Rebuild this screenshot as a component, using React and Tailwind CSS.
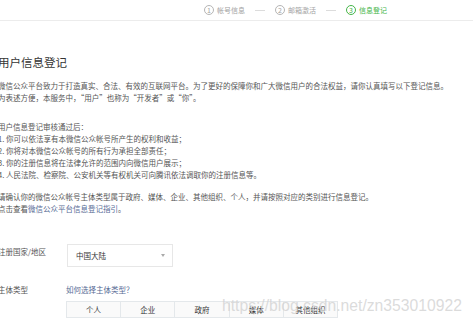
const steps = [
  { n: '1', label: '帐号信息', active: false },
  { n: '2', label: '邮箱激活', active: false },
  { n: '3', label: '信息登记', active: true },
];

const types = ['个人', '企业', '政府', '媒体', '其他组织'];

const Step = ({ n, label, active }) => (
  <div className={`flex items-center gap-[3px] ${active ? 'text-[#44b549]' : 'text-[#a3a3a3]'}`}>
    <span
      className={`flex h-[10px] w-[10px] items-center justify-center rounded-full border text-[7px] leading-none ${
        active ? 'border-[#44b549]' : 'border-[#b5b5b5]'
      }`}
    >
      {n}
    </span>
    <span className="text-[7px]">{label}</span>
  </div>
);

export default function App() {
  return (
    <div className="relative h-[326px] w-[473px] overflow-hidden bg-white font-['Noto_Sans_CJK_SC','Liberation_Sans',sans-serif]">
      {/* steps */}
      <div className="flex h-[21px] items-center border-b border-[#ececec] pl-[204px]">
        <Step {...steps[0]} />
        <span className="mx-[10px] h-px w-[10px] bg-[#dcdcdc]" />
        <Step {...steps[1]} />
        <span className="mx-[10px] h-px w-[10px] bg-[#dcdcdc]" />
        <Step {...steps[2]} />
      </div>

      <div className="-ml-[2px] text-[7.5px] leading-[12px] text-[#555]">
        <h2 className="mt-[33px] text-[11.5px] leading-[16px] text-[#353535]">用户信息登记</h2>

        <div className="mt-[10px]">
          <p>微信公众平台致力于打造真实、合法、有效的互联网平台。为了更好的保障你和广大微信用户的合法权益，请你认真填写以下登记信息。</p>
          <p>为表述方便，本服务中，“用户”也称为“开发者”或“你”。</p>
        </div>

        <div className="mt-[17px]">
          <p>用户信息登记审核通过后：</p>
          <p>1. 你可以依法享有本微信公众帐号所产生的权利和收益；</p>
          <p>2. 你将对本微信公众帐号的所有行为承担全部责任；</p>
          <p>3. 你的注册信息将在法律允许的范围内向微信用户展示；</p>
          <p>4. 人民法院、检察院、公安机关等有权机关可向腾讯依法调取你的注册信息等。</p>
        </div>

        <div className="mt-[10px]">
          <p>请确认你的微信公众帐号主体类型属于政府、媒体、企业、其他组织、个人，并请按照对应的类别进行信息登记。</p>
          <p>
            点击查看<span className="text-[#576b95]">微信公众平台信息登记指引</span>。
          </p>
        </div>

        <div className="mt-[29px] flex items-start">
          <span className="mt-[2px] w-[69px]">注册国家/地区</span>
          <div className="flex h-[23px] w-[106px] items-center justify-between border border-[#e7e7e7] pl-[8px] pr-[7px] text-[#353535]">
            <span>中国大陆</span>
            <span className="h-0 w-0 border-x-[2.5px] border-t-[3px] border-x-transparent border-t-[#aaa]" />
          </div>
        </div>

        <div className="mt-[17px] flex items-start">
          <span className="w-[68px]">主体类型</span>
          <div className="flex flex-col">
            <span className="text-[#576b95]">如何选择主体类型？</span>
            <div className="mt-[5px] flex w-[272px] border border-[#e4e8eb] bg-[#fafafa]">
              {types.map((t, i) => (
                <div
                  key={t}
                  className={`flex h-[15px] flex-1 items-center justify-center text-[#353535] ${
                    i > 0 ? 'border-l border-[#e4e8eb]' : ''
                  }`}
                >
                  {t}
                </div>
              ))}
            </div>
          </div>
        </div>
      </div>

      {/* watermark */}
      <div className="absolute left-[222px] top-[298px] font-['Liberation_Sans',sans-serif] text-[15.7px] leading-none text-[#d2d2d2]/80">
        https://blog.csdn.net/zn353010922
      </div>
    </div>
  );
}
